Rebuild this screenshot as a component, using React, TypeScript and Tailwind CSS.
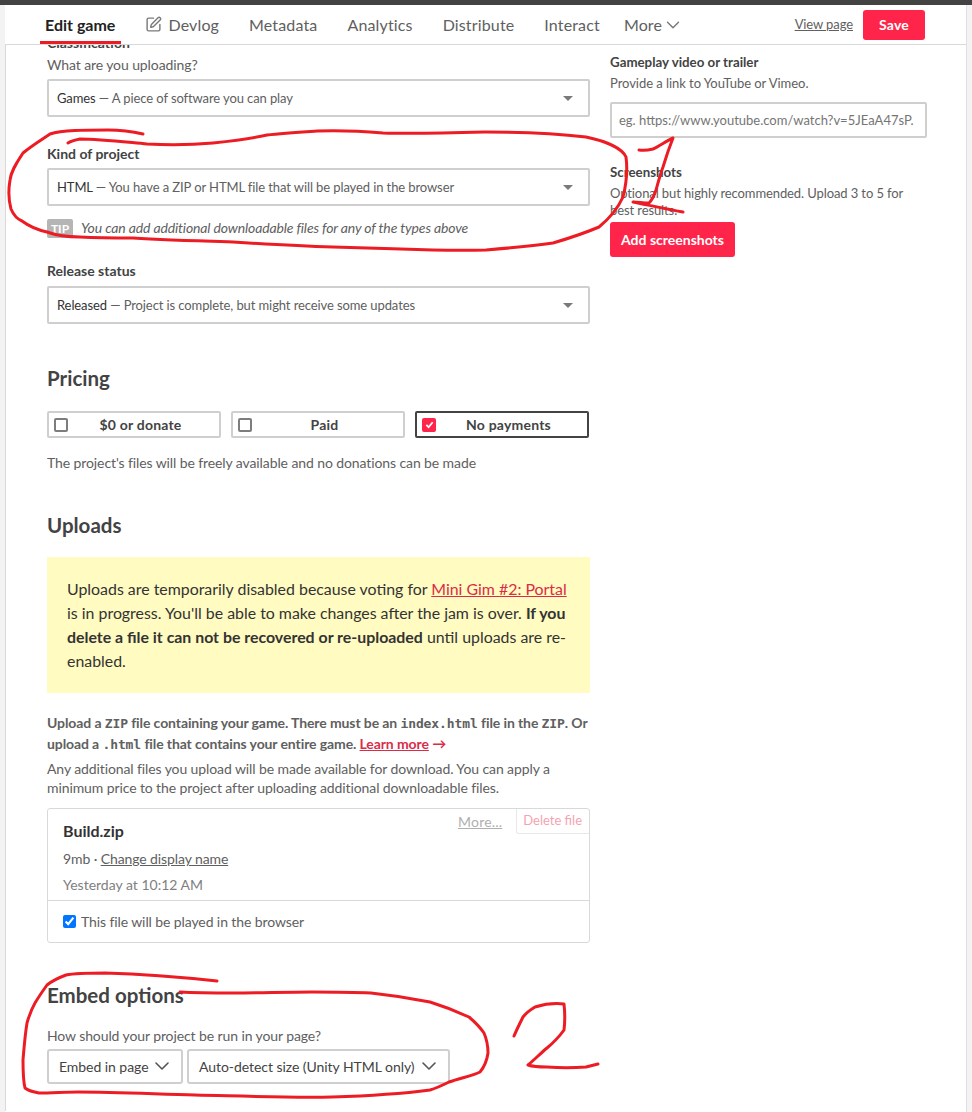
import { ChevronDown, SquarePen } from "lucide-react";

const navItems = ["Metadata", "Analytics", "Distribute", "Interact"];

function FakeSelect({ value, hint }: { value: string; hint: string }) {
  return (
    <div className="flex h-[38px] items-center justify-between rounded-[2px] border-2 border-[#cfcfcf] bg-white pl-[8px] pr-[15px] text-[13px] tracking-[-0.1px] text-[#606060]">
      <span className="pt-[1px]">
        <span className="text-[#333]">{value}</span> — {hint}
      </span>
      <span className="h-0 w-0 border-x-[5px] border-t-[5px] border-x-transparent border-t-[#7a7a7a]" />
    </div>
  );
}

function PriceOption({ label, checked }: { label: string; checked?: boolean }) {
  return (
    <div className={`flex h-[27px] w-[174px] shrink-0 items-center rounded-[2px] border-2 pl-[5px] ${checked ? "border-[#434343]" : "border-[#cfcfcf]"}`}>
      {checked ? (
        <span className="grid h-[14px] w-[14px] place-items-center rounded-[2px] bg-[#ff2449]">
          <svg viewBox="0 0 10 10" className="h-[9px] w-[9px]" fill="none" stroke="white" strokeWidth="2">
            <path d="M1.5 5.5 L4 8 L8.5 2.5" />
          </svg>
        </span>
      ) : (
        <span className="h-[14px] w-[14px] rounded-[2px] border-2 border-[#7d7d7d]" />
      )}
      <span className="flex-1 pr-[6px] text-center text-[14px] font-bold tracking-[0.2px] text-[#434343]">{label}</span>
    </div>
  );
}

function EmbedSelect({ label, width }: { label: string; width: string }) {
  return (
    <div className={`flex h-[35px] items-center justify-between rounded-[3px] border-2 border-[#cfcfcf] pl-[10px] pr-[7px] text-[14px] tracking-[-0.05px] text-[#434343] ${width}`}>
      <span>{label}</span>
      <ChevronDown size={24} strokeWidth={1.6} className="-mt-[2px] text-[#555]" />
    </div>
  );
}

// the red marker scribbles someone drew on top of the screenshot
function Scribbles() {
  return (
    <svg className="pointer-events-none absolute left-0 top-0 h-[1112px] w-[972px]" viewBox="0 0 972 1112" fill="none" stroke="#ed1c24" strokeWidth="3" strokeLinecap="round" strokeLinejoin="round">
      <path d="M143 134 C130 131 120 130 108 130 C85 130 62 130 50 134 C38 142 30 147 23 153 C15 165 11 172 10 180 C8 192 9 202 11 209 C14 216 17 219 22 221 C30 227 38 230 47 232 C58 236 68 237 80 237 C100 238 115 238 133 238 C165 240 200 241 233 242 C265 244 300 246 333 247 C365 248 400 249 433 250 C455 250.5 470 250.5 486 250 C510 248 532 246 553 243 C570 238 585 233 599 227 C610 218 618 208 623 197 C626 185 628 172 626 157 C622 148 605 141 586 137 C560 134 520 132 486 132 C450 133 415 134 383 133 C360 131 340 130 317 131 C300 132 282 133 267 135 C250 139 232 141 213 143 C190 145 168 145 147 144 C125 142 100 139 80 139 C75 140 71 141 68 143" />
      <path d="M639 150 C645 151 649 150 653 149 C660 146 666 141 673 138 C669 148 666 157 663 167 C660 175 658 183 656 190 C654 196 652 200 649 203 C643 203 638 202 633 202 C648 205 666 209 683 212" />
      <path d="M40 42.5 H121" strokeLinecap="butt" />
      <path d="M217 981 C180 977 140 974 105 973 C90 973 76 973 66 975 C58 978 52 981 47 985 C42 992 38 998 35 1003 C31 1010 29 1016 27 1023 C25 1035 24 1048 23 1060 C23 1070 23 1080 25 1088 C29 1091 33 1092 39 1093 C52 1093 65 1092 78 1092 C115 1092 155 1094 195 1095 C240 1096 290 1098 332 1097 C365 1096 400 1094 430 1090 C437 1088 443 1085 449 1082 C460 1078 472 1076 480 1072 C485 1066 487 1060 488 1053 C488 1046 487 1040 484 1033 C480 1027 475 1022 469 1017 C456 1011 443 1006 430 1002 C410 998 390 995 371 993 C350 992 330 992 312 992 C285 992 260 993 234 993 C215 993 197 993 180 992" />
      <path d="M514 1036 C517 1029 520 1023 523 1017 C526 1013 530 1010 535 1007 C545 1004 555 1003 564 1004 C565 1013 565 1022 564 1030 C559 1037 553 1043 547 1048 C540 1054 534 1060 528 1065 C534 1067 540 1067 547 1067 C560 1068 573 1068 586 1067 C590 1066 594 1065 598 1064" />
    </svg>
  );
}

export default function App() {
  return (
    <div className="relative h-[1112px] w-[972px] overflow-hidden bg-[#f3f3f3] font-['Lato',sans-serif] text-[#434343]">
      <div className="h-[5px] bg-[#434343]" />
      <div className="ml-[5px] mr-[5px] h-[1107px] overflow-hidden border-r border-[#e0e0e0] bg-white">
        <nav className="flex h-[40px] items-center border-b border-[#d9d9d9] pl-[40px] pr-[41px] text-[16px] tracking-[0.15px] text-[#606060]">
          <div className="flex items-center gap-[30px]">
            <span className="font-bold tracking-normal text-[#222]">Edit game</span>
            <span className="flex items-center gap-[6px]">
              <SquarePen size={17} strokeWidth={2} className="text-[#7a7a7a]" />
              Devlog
            </span>
            {navItems.map((item) => (
              <span key={item}>{item}</span>
            ))}
            <span className="-ml-[6px] flex items-center">
              More
              <ChevronDown size={22} strokeWidth={1.5} className="text-[#777]" />
            </span>
          </div>
          <div className="ml-auto flex items-center gap-[10px]">
            <a className="text-[13px] tracking-[-0.1px] underline">View page</a>
            <button className="h-[30px] w-[62px] rounded-[3px] bg-[#ff2449] text-[14px] font-bold text-white">Save</button>
          </div>
        </nav>

        <main className="flex h-[1066px] gap-[20px] overflow-hidden border-l border-[#d9d9d9] pl-[41px]">
          <div className="w-[543px] shrink-0">
            <h3 className="-mt-[12px] text-[14px] leading-[20px] font-bold">Classification</h3>
            <p className="mt-[2px] text-[14px] leading-[20px] tracking-[-0.1px] text-[#606060]">What are you uploading?</p>
            <div className="mt-[4px]">
              <FakeSelect value="Games" hint="A piece of software you can play" />
            </div>

            <h3 className="mt-[27px] text-[14px] leading-[20px] font-bold">Kind of project</h3>
            <div className="mt-[4px]">
              <FakeSelect value="HTML" hint="You have a ZIP or HTML file that will be played in the browser" />
            </div>
            <div className="mt-[13px] flex h-[19px] items-center gap-[8px]">
              <span className="grid h-[19px] w-[26px] place-items-center rounded-[2px] bg-[#b5b5b5] text-[12px] font-bold text-white">TIP</span>
              <em className="-mt-[2px] text-[14px] tracking-[-0.14px] text-[#606060]">You can add additional downloadable files for any of the types above</em>
            </div>

            <h3 className="mt-[23px] text-[14px] leading-[20px] font-bold">Release status</h3>
            <div className="mt-[5px]">
              <FakeSelect value="Released" hint="Project is complete, but might receive some updates" />
            </div>

            <h2 className="mt-[40px] text-[20.5px] leading-[28px] font-bold">Pricing</h2>
            <div className="mt-[19px] flex gap-[10px]">
              <PriceOption label="$0 or donate" />
              <PriceOption label="Paid" />
              <PriceOption label="No payments" checked />
            </div>
            <p className="mt-[15px] text-[14px] leading-[20px] tracking-[-0.1px] text-[#606060]">The project's files will be freely available and no donations can be made</p>

            <h2 className="mt-[38px] text-[20.5px] leading-[28px] font-bold">Uploads</h2>
            <div className="mt-[18px] bg-[#fffbc1] py-[20px] pl-[20px] pr-[18px] text-[15.9px] leading-[24px] text-[#333]">
              Uploads are temporarily disabled because voting for <a className="text-[#da2c49] underline">Mini Gim #2: Portal</a> is in progress. You'll be able to make changes after the jam is over. <strong>If you delete a file it can not be recovered or re-uploaded</strong> until uploads are re-enabled.
            </div>

            <p className="mt-[20px] text-[14px] leading-[20px] font-bold tracking-[-0.1px] text-[#606060]">
              Upload a <code className="font-['DejaVu_Sans_Mono',monospace] text-[13px]">ZIP</code> file containing your game. There must be an <code className="font-['DejaVu_Sans_Mono',monospace] text-[13px]">index.html</code> file in the <code className="font-['DejaVu_Sans_Mono',monospace] text-[13px]">ZIP</code>. Or upload a <code className="font-['DejaVu_Sans_Mono',monospace] text-[13px]">.html</code> file that contains your entire game. <a className="text-[#da2c49] underline">Learn more</a> <span className="text-[#da2c49]">→</span>
            </p>
            <p className="mt-[4px] text-[14px] leading-[19px] tracking-[-0.1px] text-[#606060]">Any additional files you upload will be made available for download. You can apply a minimum price to the project after uploading additional downloadable files.</p>

            <div className="relative mt-[11px] h-[135px] rounded-[3px] border border-[#d9d9d9]">
              <div className="absolute right-0 top-0 flex items-center gap-[14px]">
                <a className="text-[14px] tracking-[0.2px] text-[#b0b0b0] underline">More...</a>
                <span className="rounded-bl-[3px] rounded-tr-[3px] border-b border-l border-[#e8e8e8] py-[2px] pl-[6px] pr-[7px] text-[13px] text-[#f4a3b3]">Delete file</span>
              </div>
              <div className="h-[91px] px-[15px] pt-[12px]">
                <div className="text-[16px] leading-[20px] font-bold text-[#333]">Build.zip</div>
                <div className="mt-[8px] text-[14px] leading-[20px] tracking-[-0.1px] text-[#606060]">
                  9mb · <a className="underline">Change display name</a>
                </div>
                <div className="mt-[6px] text-[14px] leading-[20px] text-[#808080]">Yesterday at 10:12 AM</div>
              </div>
              <label className="flex h-[42px] items-center gap-[5px] border-t border-[#d9d9d9] px-[15px] text-[14px] tracking-[-0.1px] text-[#606060]">
                <input type="checkbox" defaultChecked className="h-[13px] w-[13px]" />
                This file will be played in the browser
              </label>
            </div>

            <h2 className="mt-[38px] text-[20.5px] leading-[28px] font-bold">Embed options</h2>
            <p className="mt-[17px] text-[14px] leading-[20px] tracking-[-0.1px] text-[#606060]">How should your project be run in your page?</p>
            <div className="mt-[3px] flex gap-[4px]">
              <EmbedSelect label="Embed in page" width="w-[136px]" />
              <EmbedSelect label="Auto-detect size (Unity HTML only)" width="w-[263px]" />
            </div>
          </div>

          <aside className="w-[317px] shrink-0 pt-[7px]">
            <h3 className="text-[13.3px] leading-[20px] font-bold">Gameplay video or trailer</h3>
            <p className="mt-[1px] text-[13px] leading-[20px] tracking-[-0.05px] text-[#606060]">Provide a link to YouTube or Vimeo.</p>
            <input readOnly placeholder="eg. https://www.youtube.com/watch?v=5JEaA47sP." className="mt-[9px] block h-[36px] w-[317px] rounded-[2px] border-2 border-[#cfcfcf] px-[7px] text-[13px] outline-none placeholder:text-[#757575]" />
            <h3 className="mt-[24px] text-[13.3px] leading-[20px] font-bold">Screenshots</h3>
            <p className="mt-[3px] text-[13px] leading-[17px] tracking-[-0.1px] text-[#606060]">Optional but highly recommended. Upload 3 to 5 for best results.</p>
            <button className="mt-[3px] h-[35px] w-[125px] rounded-[3px] bg-[#ff2449] text-[14px] font-bold text-white">Add screenshots</button>
          </aside>
        </main>
      </div>
      <Scribbles />
    </div>
  );
}
